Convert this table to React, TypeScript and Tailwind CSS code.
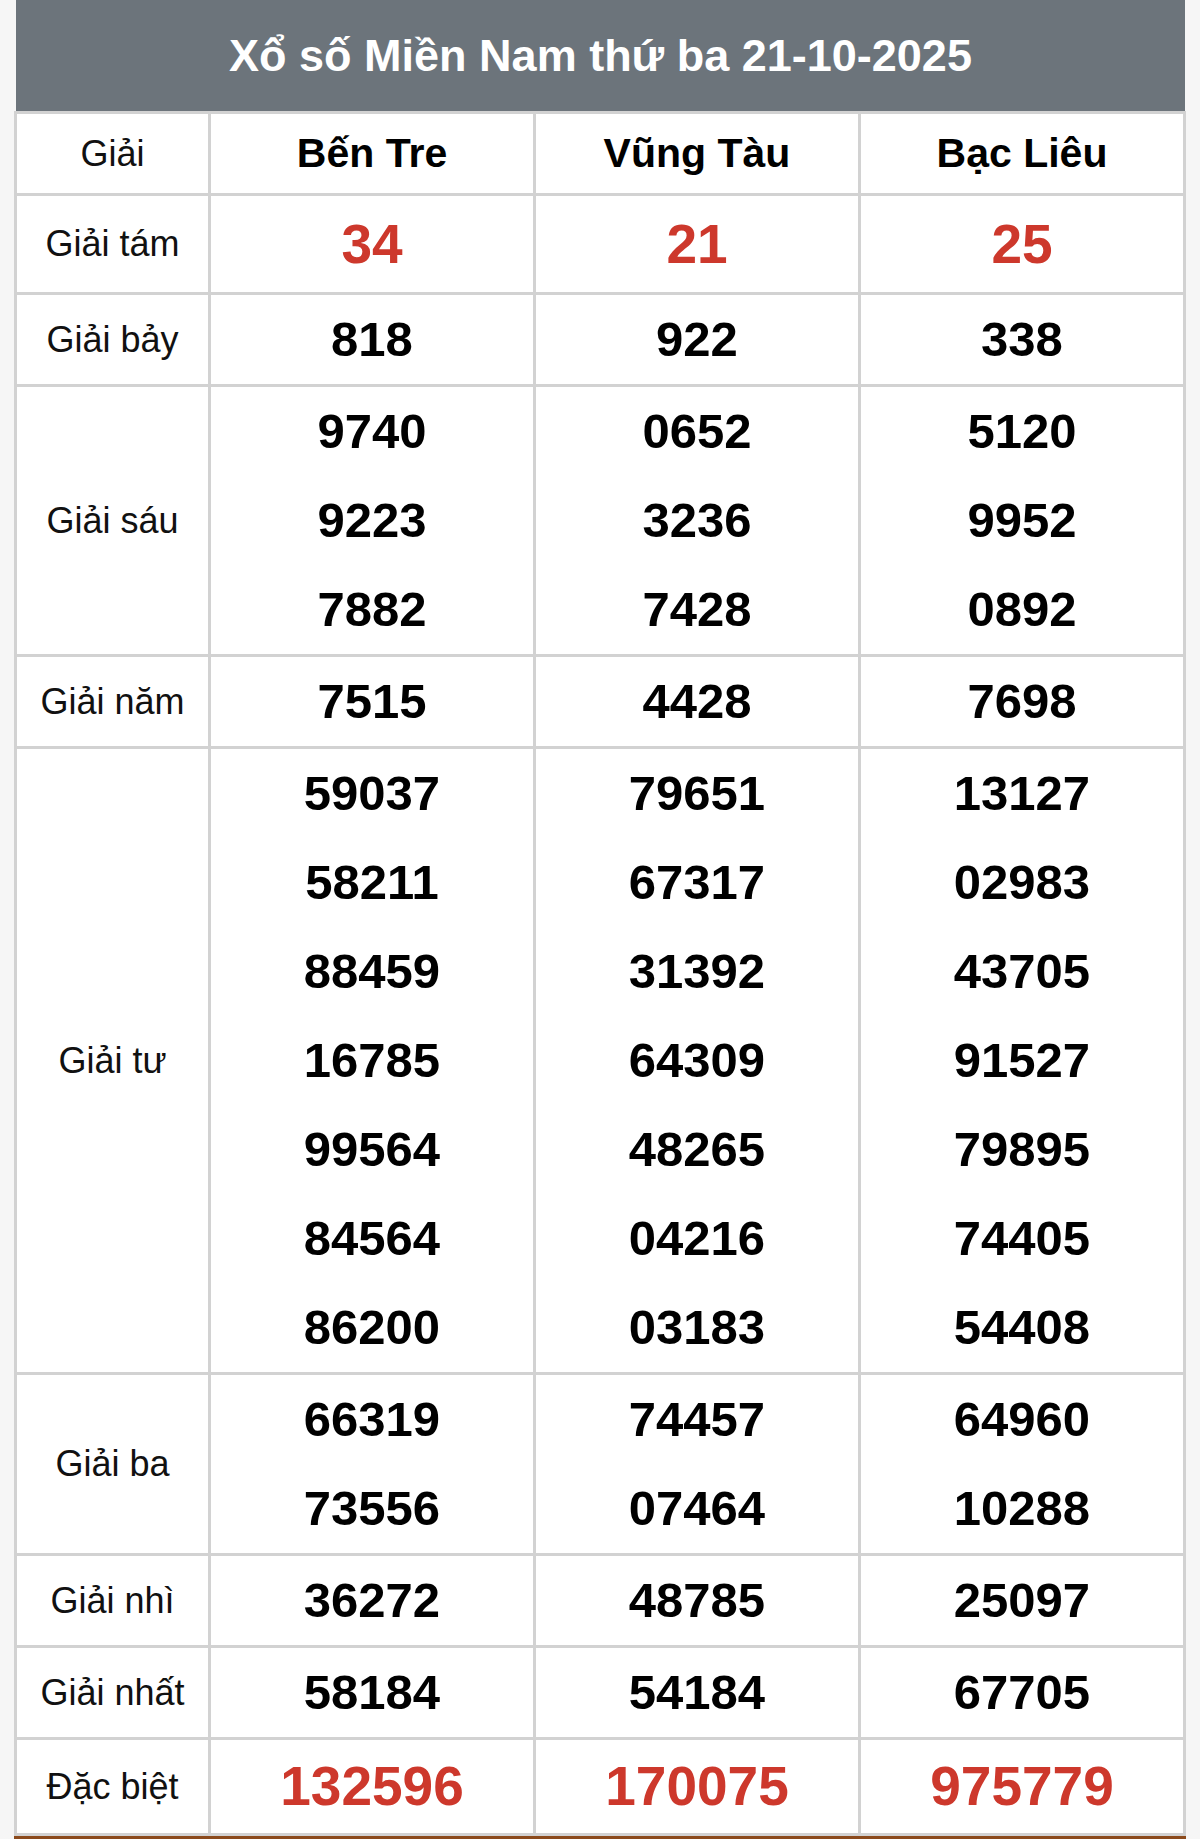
import React from "react";

type Row = { label: string; values: string[][]; lh: string; red?: boolean };

const rows: Row[] = [
  { label: "Giải tám", values: [["34"], ["21"], ["25"]], lh: "leading-[96px]", red: true },
  { label: "Giải bảy", values: [["818"], ["922"], ["338"]], lh: "leading-[89px]" },
  {
    label: "Giải sáu",
    values: [
      ["9740", "9223", "7882"],
      ["0652", "3236", "7428"],
      ["5120", "9952", "0892"],
    ],
    lh: "leading-[89px]",
  },
  { label: "Giải năm", values: [["7515"], ["4428"], ["7698"]], lh: "leading-[89px]" },
  {
    label: "Giải tư",
    values: [
      ["59037", "58211", "88459", "16785", "99564", "84564", "86200"],
      ["79651", "67317", "31392", "64309", "48265", "04216", "03183"],
      ["13127", "02983", "43705", "91527", "79895", "74405", "54408"],
    ],
    lh: "leading-[89px]",
  },
  {
    label: "Giải ba",
    values: [
      ["66319", "73556"],
      ["74457", "07464"],
      ["64960", "10288"],
    ],
    lh: "leading-[89px]",
  },
  { label: "Giải nhì", values: [["36272"], ["48785"], ["25097"]], lh: "leading-[89px]" },
  { label: "Giải nhất", values: [["58184"], ["54184"], ["67705"]], lh: "leading-[89px]" },
  { label: "Đặc biệt", values: [["132596"], ["170075"], ["975779"]], lh: "leading-[93px]", red: true },
];

export default function App() {
  return (
    <div
      className="min-h-[1839px] w-[1200px] bg-[#f6f6f6] px-[14px]"
      style={{ fontFamily: '"Liberation Sans", Arial, Helvetica, sans-serif' }}
    >
      <div className="w-[1172px]">
        <div className="ml-[2px] mr-[1px] flex h-[111px] items-center justify-center bg-[#6c747b]">
          <h1 className="text-[45px] font-bold text-white">Xổ số Miền Nam thứ ba 21-10-2025</h1>
        </div>
        <div className="grid grid-cols-[191px_1fr_1fr_1fr] gap-[3px] bg-[#d2d2d2] p-[3px]">
          <div className="flex h-[79px] items-center justify-center bg-white text-[36px] text-[#111]">Giải</div>
          {["Bến Tre", "Vũng Tàu", "Bạc Liêu"].map((p) => (
            <div key={p} className="flex h-[79px] items-center justify-center bg-white text-[41px] font-bold text-black">
              {p}
            </div>
          ))}
          {rows.map((r) => (
            <React.Fragment key={r.label}>
              <div className="flex items-center justify-center bg-white text-[36px] text-[#111]">{r.label}</div>
              {r.values.map((col, i) => (
                <div key={i} className="flex flex-col items-center bg-white">
                  {col.map((n, j) => (
                    <div
                      key={j}
                      className={
                        r.red
                          ? `${r.lh} text-[55px] font-bold text-[#cd382c]`
                          : `${r.lh} text-[49px] font-bold text-black`
                      }
                    >
                      {n}
                    </div>
                  ))}
                </div>
              ))}
            </React.Fragment>
          ))}
        </div>
        <div className="h-[3px] bg-[#8b4a1c]" />
      </div>
    </div>
  );
}
